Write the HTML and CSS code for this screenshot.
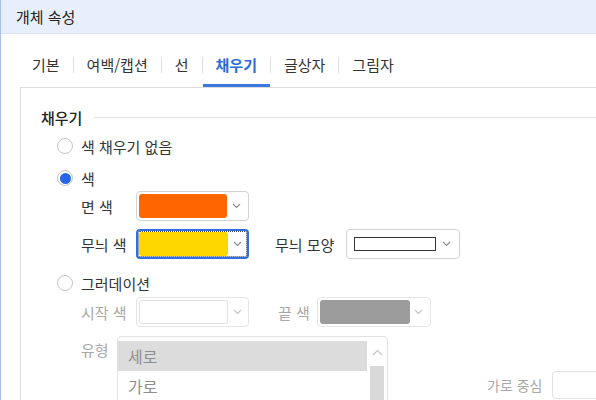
FILE: index.html
```html
<!DOCTYPE html>
<html lang="ko">
<head>
<meta charset="utf-8">
<title>개체 속성</title>
<link rel="stylesheet" href="styles.css">
</head>
<body>
<div class="dialog">
  <div class="header">개체 속성</div>
  <div class="tabs">
    <div class="tab">기본</div><span class="sep"></span>
    <div class="tab">여백/캡션</div><span class="sep"></span>
    <div class="tab">선</div><span class="sep"></span>
    <div class="tab active">채우기</div><span class="sep"></span>
    <div class="tab">글상자</div><span class="sep"></span>
    <div class="tab">그림자</div>
  </div>
  <div class="panel">
    <div class="section-title"><span>채우기</span></div>

    <div class="radio-row row-none"><span class="radio"></span><span>색 채우기 없음</span></div>
    <div class="radio-row row-color"><span class="radio checked"></span><span>색</span></div>

    <div class="field-row row-face">
      <span class="label">면 색</span>
      <div class="select">
        <span class="swatch orange"></span>
        <span class="chev"><svg width="9" height="6" viewBox="0 0 9 6"><path d="M1 1l3.5 3.5L8 1" fill="none" stroke="#8a8a8a" stroke-width="1.1"/></svg></span>
      </div>
    </div>

    <div class="field-row row-pattern">
      <span class="label">무늬 색</span>
      <div class="select focused">
        <span class="swatch yellow"></span>
        <span class="chev"><svg width="9" height="6" viewBox="0 0 9 6"><path d="M1 1l3.5 3.5L8 1" fill="none" stroke="#8a8a8a" stroke-width="1.1"/></svg></span>
      </div>
      <span class="label2 label-shape">무늬 모양</span>
      <div class="select shape">
        <span class="pattern-rect"></span>
        <span class="chev"><svg width="9" height="6" viewBox="0 0 9 6"><path d="M1 1l3.5 3.5L8 1" fill="none" stroke="#8a8a8a" stroke-width="1.1"/></svg></span>
      </div>
    </div>

    <div class="radio-row row-grad"><span class="radio"></span><span>그러데이션</span></div>

    <div class="field-row row-start disabled">
      <span class="label">시작 색</span>
      <div class="select">
        <span class="swatch white"></span>
        <span class="chev"><svg width="9" height="6" viewBox="0 0 9 6"><path d="M1 1l3.5 3.5L8 1" fill="none" stroke="#c4c4c4" stroke-width="1.1"/></svg></span>
      </div>
      <span class="label2 label-end">끝 색</span>
      <div class="select end">
        <span class="swatch gray"></span>
        <span class="chev"><svg width="9" height="6" viewBox="0 0 9 6"><path d="M1 1l3.5 3.5L8 1" fill="none" stroke="#c4c4c4" stroke-width="1.1"/></svg></span>
      </div>
    </div>

    <div class="type-row disabled">
      <span class="label type-label">유형</span>
      <div class="listbox">
        <div class="items">
          <div class="item selected">세로</div>
          <div class="item">가로</div>
        </div>
        <div class="scrollbar">
          <span class="up"><svg width="11" height="7" viewBox="0 0 11 7"><path d="M1 6l4.5-4.5L10 6" fill="none" stroke="#c4c4c4" stroke-width="1.1"/></svg></span>
          <span class="thumb"></span>
        </div>
      </div>
      <div class="center-field">
        <span class="label2">가로 중심</span>
        <span class="input"></span>
      </div>
    </div>
  </div>
</div>
</body>
</html>
```

FILE: styles.css
```css
html, body {
  margin: 0;
  padding: 0;
  width: 596px;
  height: 400px;
  overflow: hidden;
  background: #ffffff;
}

.dialog {
  font-family: "Noto Sans CJK KR", "Noto Sans", sans-serif;
  font-size: 15px;
  color: #333333;
  border-left: 1px solid #a9bfe6;
  height: 400px;
  box-sizing: border-box;
  overflow: hidden;
}

.header {
  height: 33px;
  line-height: 33px;
  padding-left: 15px;
  background: #e7eefc;
  border-bottom: 1px solid #d9e2f3;
  color: #222222;
}

.tabs {
  display: flex;
  align-items: flex-start;
  padding-left: 18px;
}

.tab {
  padding: 20px 13px 9px;
  line-height: 21px;
  border-bottom: 3px solid transparent;
  color: #333333;
  white-space: nowrap;
}

.tab.active {
  color: #2a6bd9;
  font-weight: bold;
  border-bottom-color: #3b78e0;
}

.sep {
  width: 1px;
  height: 16px;
  margin-top: 23px;
  background: #dddddd;
}

.panel {
  margin-left: 19px;
  border-top: 1px solid #dcdcdc;
  border-left: 1px solid #dcdcdc;
  padding-left: 20px;
  padding-top: 20px;
  height: 400px;
}

.section-title {
  display: flex;
  align-items: center;
  height: 20px;
  line-height: 20px;
  color: #222222;
  font-weight: 500;
}

.section-title::after {
  content: "";
  flex: 1;
  height: 1px;
  background: #dddddd;
  margin-left: 12px;
  margin-top: -1px;
}

.radio-row {
  display: flex;
  align-items: center;
  height: 26px;
  padding-left: 16px;
  color: #333333;
}

.row-none { margin-top: 5px; }
.row-color { margin-top: 6px; }
.row-grad { margin-top: 11px; }

.radio {
  width: 16px;
  height: 16px;
  box-sizing: border-box;
  border: 1px solid #c4c4c4;
  border-radius: 50%;
  background: #ffffff;
  margin-right: 8px;
  display: flex;
  align-items: center;
  justify-content: center;
}

.radio.checked::after {
  content: "";
  width: 11px;
  height: 11px;
  border-radius: 50%;
  background: #2566e8;
}

.field-row {
  display: flex;
  align-items: center;
  height: 30px;
  padding-left: 40px;
}

.row-face { margin-top: 0; }
.row-pattern { margin-top: 8px; }
.row-start { margin-top: 1px; }

.label {
  width: 55px;
  flex: none;
  white-space: nowrap;
}

.label2 {
  white-space: nowrap;
}

.label-shape { margin-left: 26px; margin-right: 12px; }
.label-end { margin-left: 29px; margin-right: 7px; }

.select {
  position: relative;
  width: 113px;
  height: 30px;
  box-sizing: border-box;
  border: 1px solid #d2d2d2;
  border-radius: 4px;
  padding: 2px;
  display: flex;
  align-items: stretch;
  background: #ffffff;
  flex: none;
}

.select.shape { width: 114px; }
.select.end { width: 114px; }

.select.focused {
  border: 2px solid #2f6fe0;
  padding: 1px;
}

.select.focused::after {
  content: "";
  position: absolute;
  inset: 0;
  border: 1px dotted #444444;
  border-radius: 2px;
  pointer-events: none;
}

.swatch {
  width: 88px;
  border-radius: 3px;
  flex: none;
}

.swatch.orange { background: #ff6600; }
.swatch.yellow { background: #ffd700; width: 89px; }
.swatch.white { background: #ffffff; border: 1px solid #e2e2e2; width: 89px; box-sizing: border-box; }
.swatch.gray { background: #9c9c9c; width: 90px; }

.chev {
  flex: 1;
  display: flex;
  align-items: center;
  justify-content: center;
}

.pattern-rect {
  width: 82px;
  height: 14px;
  box-sizing: border-box;
  border: 1.5px solid #333333;
  background: #ffffff;
  margin: auto 0 auto 5px;
  flex: none;
}

.disabled .label,
.disabled .label2 {
  color: #a8a8a8;
}

.disabled .select {
  border-color: #e6e6e6;
}

.type-row {
  display: flex;
  align-items: flex-start;
  margin-top: 9px;
  padding-left: 40px;
}

.type-label {
  width: 36px;
  line-height: 20px;
  margin-top: 4px;
}

.listbox {
  width: 271px;
  height: 80px;
  box-sizing: border-box;
  border: 1px solid #e2e2e2;
  border-radius: 4px;
  padding-top: 4px;
  display: flex;
  flex: none;
}

.items {
  flex: 1;
}

.item {
  height: 30px;
  line-height: 30px;
  padding-left: 10px;
  font-size: 16px;
  color: #8e8e8e;
}

.item.selected {
  background: #dcdcdc;
}

.scrollbar {
  width: 20px;
  display: flex;
  flex-direction: column;
  align-items: center;
}

.up {
  height: 22px;
  display: flex;
  align-items: center;
  justify-content: center;
}

.thumb {
  width: 14px;
  flex: 1;
  margin-top: 3px;
  background: #d9d9d9;
}

.center-field {
  display: flex;
  align-items: center;
  margin-left: 99px;
  margin-top: 35px;
  height: 28px;
}

.center-field .label2 {
  font-size: 14px;
  margin-right: 10px;
}

.input {
  width: 70px;
  height: 28px;
  box-sizing: border-box;
  border: 1px solid #e2e2e2;
  border-radius: 4px;
  flex: none;
}
```
